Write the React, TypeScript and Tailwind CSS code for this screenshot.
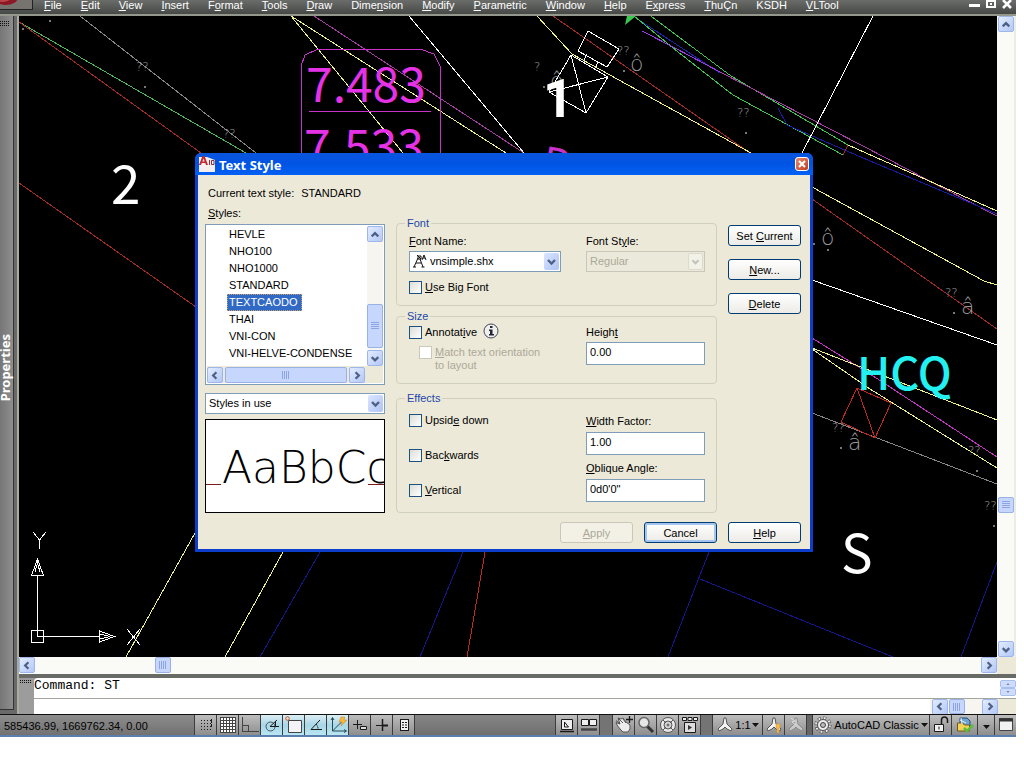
import { useState, type ReactNode } from "react";
import clsx from "clsx";

const MENUS = [
  "&File", "&Edit", "&View", "&Insert", "F&ormat", "&Tools", "&Draw", "Dime&nsion",
  "&Modify", "&Parametric", "&Window", "&Help", "E&xpress", "&ThuÇn", "KSDH", "&VLTool",
];

const STYLES = [
  "HEVLE", "NHO100", "NHO1000", "STANDARD", "TEXTCAODO", "THAI", "VNI-CON", "VNI-HELVE-CONDENSE",
];

// "&" marks the keyboard mnemonic, as in a Windows resource file
function Mnemonic({ text }: { text: string }) {
  const at = text.indexOf("&");
  if (at < 0) return <span>{text}</span>;
  return (
    <span>
      {text.slice(0, at)}
      <span className="underline underline-offset-1">{text[at + 1]}</span>
      {text.slice(at + 2)}
    </span>
  );
}

const CHEVRONS = {
  up: "M4 9.500 L7.500 6 L11 9.500",
  down: "M4 6 L7.500 9.500 L11 6",
  left: "M9 4 L5.500 7.500 L9 11",
  right: "M6 4 L9.500 7.500 L6 11",
};

type Direction = keyof typeof CHEVRONS;

function Chevron({ dir, className = "text-[#4d6185]" }: { dir: Direction; className?: string }) {
  return (
    <svg viewBox="0 0 15 15" className={clsx("size-[15px]", className)} fill="none" stroke="currentColor" strokeWidth="2.4">
      <path d={CHEVRONS[dir]} />
    </svg>
  );
}

function ScrollButton({ dir }: { dir: Direction }) {
  return (
    <button
      aria-label={`Scroll ${dir}`}
      className="flex size-4 shrink-0 items-center justify-center rounded-xs border border-[#9db6ec] bg-linear-to-br from-[#e3ecff] to-[#b4c8f6]"
    >
      <Chevron dir={dir} />
    </button>
  );
}

function Thumb({ className, vertical }: { className: string; vertical?: boolean }) {
  return (
    <div
      className={clsx(
        "flex shrink-0 items-center justify-center rounded-xs border border-[#98b1e6] bg-[#c6d6fc]",
        className,
      )}
    >
      <svg viewBox="0 0 8 8" className={clsx("size-2", vertical && "rotate-90")} stroke="#8da5e2" shapeRendering="crispEdges">
        <path d="M0.500 0V8M2.500 0V8M4.500 0V8M6.500 0V8" />
      </svg>
    </div>
  );
}

function MenuBar() {
  return (
    <header className="flex h-4 shrink-0 border-b-2 border-[#94988c] bg-linear-to-b from-[#6b6d6b] to-[#474947] text-white">
      <button aria-label="Application menu" className="h-[10px] w-[33px] shrink-0 border-r border-b border-[#222] bg-[#77736f]">
        <svg viewBox="0 0 32 9" className="h-[9px] w-8">
          <ellipse cx="6" cy="-3" rx="12" ry="8" fill="#8d1824" />
          <ellipse cx="3" cy="-3" rx="8" ry="5" fill="#b8434b" />
        </svg>
      </button>
      <nav className="flex items-start gap-[19px] pl-[11px] font-['Liberation_Sans',Arial,sans-serif] text-[11px] leading-[11px] whitespace-nowrap">
        {MENUS.map((menu) => (
          <button key={menu}>
            <Mnemonic text={menu} />
          </button>
        ))}
      </nav>
      <div className="ml-auto flex h-[10px] items-start gap-1 pr-[3px]">
        <button aria-label="Minimize">
          <svg viewBox="0 0 13 10" className="h-[10px] w-[13px]"><path d="M1 4h11v3H1z" fill="#fff" /></svg>
        </button>
        <button aria-label="Restore">
          <svg viewBox="0 0 12 10" className="h-[10px] w-3" fill="none" stroke="#fff" strokeWidth="2"><path d="M2 1h8v6H2zM5 4h2" /></svg>
        </button>
        <button aria-label="Close drawing">
          <svg viewBox="0 0 12 10" className="h-[10px] w-3" stroke="#fff" strokeWidth="2.500"><path d="M2 0l8 8M10 0L2 8" /></svg>
        </button>
      </div>
    </header>
  );
}

function PropertiesPalette() {
  return (
    <aside className="flex w-[19px] shrink-0 flex-col border-r-2 border-[#a9aca2] bg-[#696969] pb-1">
      <div className="mr-[3px] flex flex-1 flex-col items-start border-r border-b border-[#333] bg-linear-to-r from-[#767676] to-[#8e8e8e] pt-[5px]">
        <svg viewBox="0 0 11 5" className="h-[5px] w-[11px]" fill="#111" shapeRendering="crispEdges">
          {[0, 2, 4].map((y) => [0, 2, 4, 6, 8].map((x) => <rect key={`${x}-${y}`} x={x} y={y} width="1" height="1" />))}
        </svg>
        <div className="flex flex-1 items-center">
          <span className="rotate-180 font-['Noto_Sans',sans-serif] text-[13px] leading-[11px] font-bold text-white [writing-mode:vertical-rl]">
            Properties
          </span>
        </div>
      </div>
    </aside>
  );
}

const LINES: [string, string][] = [
  ["#858585", "80,16 256,153"],
  ["#4fb85c", "19,22 246,153"],
  ["#a32a26", "19,22 201,153"],
  ["#a32a26", "19,183 196,307"],
  ["#a53da5", "314,16 530,157"],
  ["#f2f28c", "291,16 403,153"],
  ["#f2f28c", "291,16 506,153"],
  ["#ffffff", "409,16 524,153"],
  ["#c832c8", "301,153 301,66 305,55 318,49 420,49 434,54 440,66 440,153"],
  ["#c832c8", "309,111 431,111"],
  ["#a32a26", "553,16 750,153"],
  ["#f2f28c", "537,16 572,54 590,64 751,153"],
  ["#ffffff", "588,31 619,49 607,67 578,51 588,31"],
  ["#ffffff", "587,54 584,60"],
  ["#ffffff", "598,61 596,67"],
  ["#ffffff", "571,55 608,77 586,113 549,92 571,55 586,113"],
  ["#ffffff", "608,77 549,92"],
  ["#2222b0", "636,18 720,73"],
  ["#3cc850", "634,16 678,52 733,95 843,155"],
  ["#3cc850", "651,16 731,76 848,145"],
  ["#9b3be6", "642,31 675,48 720,72"],
  ["#a53da5", "720,72 888,159 943,188 997,216"],
  ["#1a1aa0", "778,108 787,125 863,158 997,214"],
  ["#a32a26", "848,145 843,155"],
  ["#ffffff", "873,16 802,153"],
  ["#f2f28c", "848,145 997,211"],
  ["#f2f28c", "812,187 984,281 997,285"],
  ["#a32a26", "812,199 997,329"],
  ["#ffffff", "812,280 997,345"],
  ["#c832c8", "812,338 870,374 997,457"],
  ["#f2f28c", "812,348 997,420"],
  ["#f2f28c", "812,349 870,389 997,468"],
  ["#858585", "812,413 997,484"],
  ["#c02a26", "857,388 891,403 875,438 841,422 857,388 875,438"],
  ["#17178c", "709,552 668,657"],
  ["#17178c", "700,579 893,657"],
  ["#17178c", "997,562 961,657"],
  ["#17178c", "463,552 420,657"],
  ["#17178c", "320,552 260,657"],
  ["#c02a26", "485,552 467,657"],
  ["#f2f28c", "195,533 126,657"],
  ["#f2f28c", "283,552 225,657"],
];

// surveyed point heights whose glyphs are missing from the shape font
const MARKS: [string, number, number][] = [
  ["??", 136, 71], ["??", 223, 138], ["?", 534, 71], ["??", 617, 55], ["??", 737, 117],
  ["??", 945, 297], ["??", 832, 432], ["??", 968, 455], ["??", 984, 510],
];

const LETTERS: [string, number, number][] = [
  ["ô", 630, 71], ["ô", 550, 88], ["ô", 821, 245], ["â", 961, 314], ["â", 848, 450],
];

const DOTS = [
  [50, 21], [23, 29], [145, 87], [544, 87], [624, 71], [746, 133], [814, 244], [828, 250],
  [954, 313], [841, 448], [977, 471], [994, 526],
];

function Drawing() {
  return (
    <svg
      viewBox="19 16 978 641"
      preserveAspectRatio="xMinYMin slice"
      className="absolute inset-0 size-full font-['Noto_Sans_CJK_JP','Liberation_Sans',sans-serif]"
      aria-label="Model space"
    >
      <g fill="none" shapeRendering="crispEdges">
        {LINES.map(([color, points]) => (
          <polyline key={points} points={points} stroke={color} />
        ))}
        {DOTS.map(([cx, cy]) => (
          <circle key={`${cx}-${cy}`} cx={cx} cy={cy} r="1" stroke="#777" />
        ))}
      </g>
      <path d="M627 16h9l-11 9z" fill="#3cc850" />
      <g fill="#9a9a9a" className="font-['DejaVu_Sans',sans-serif] font-extralight">
        {MARKS.map(([text, x, y]) => (
          <text key={`${x}-${y}`} x={x} y={y} fontSize="12">{text}</text>
        ))}
        {LETTERS.map(([text, x, y]) => (
          <text key={`${x}-${y}`} x={x} y={y} fontSize="22">{text}</text>
        ))}
      </g>
      <g fontSize="53" fill="#fff">
        <text x="306" y="102" fontSize="48" fill="#e632e6">7.483</text>
        <text x="304" y="164" fontSize="48" fill="#e632e6">7.533</text>
        <text x="540" y="176" fontSize="42" fill="#c832c8" transform="rotate(10 540 176)">Pa</text>
        <text x="111" y="204">2</text>
        <text x="543" y="117" className="font-['Roboto',sans-serif] font-bold">1</text>
        <text x="841" y="573">S</text>
        <text x="857" y="390" fontSize="45" fill="#23f0f0" className="font-medium">HCQ</text>
      </g>
      {/* UCS icon */}
      <g fill="none" stroke="#fff" shapeRendering="crispEdges">
        <path d="M31.500 630.500h12v12h-12zM37.500 575v61.500H99M31.500 575.500h12L37.500 559zM99.500 631v11l15-5.500zM35 572l2.500-9 2.500 9M100 634l10 2.500-10 2.500" />
        <path d="M33 532l6.500 8 6.500-8M39.500 540v9M127 629l13 16M140 629l-13 16" />
      </g>
    </svg>
  );
}

function Label({ htmlFor, children }: { htmlFor: string; children: string }) {
  return (
    <label htmlFor={htmlFor} className="block leading-[14px]">
      <Mnemonic text={children} />
    </label>
  );
}

function Check({ label, disabled }: { label: string; disabled?: boolean }) {
  return (
    <label className={clsx("flex items-start gap-[3px] leading-[13px]", disabled && "text-[#aca899]")}>
      <input
        type="checkbox"
        disabled={disabled}
        className="size-[13px] shrink-0 appearance-none border border-[#1c5180] bg-linear-to-br from-[#dcdcd7] to-white checked:bg-[#21a121] disabled:border-[#cac8bb] disabled:bg-white disabled:bg-none"
      />
      <Mnemonic text={label} />
    </label>
  );
}

function Select({ id, options, disabled, icon }: { id: string; options: string[]; disabled?: boolean; icon?: ReactNode }) {
  return (
    <div
      className={clsx(
        "relative flex h-[21px] items-center border",
        disabled ? "border-[#c9c7ba] bg-[#ebe9d9]" : "border-[#7f9db9] bg-white",
      )}
    >
      {icon}
      <select
        id={id}
        aria-label={id}
        disabled={disabled}
        className="h-full w-full flex-1 appearance-none bg-transparent px-[3px] leading-[19px] outline-none disabled:text-[#aca899] disabled:opacity-100"
      >
        {options.map((o) => (
          <option key={o}>{o}</option>
        ))}
      </select>
      <span
        className={clsx(
          "pointer-events-none absolute top-px right-px flex h-[17px] w-[15px] items-center justify-center rounded-xs",
          disabled ? "border border-[#dddacb] bg-[#f3f2e8]" : "bg-linear-to-br from-[#dbe5ff] to-[#aec4f5]",
        )}
      >
        <Chevron dir="down" className={disabled ? "text-[#c5c3b6]" : "text-[#4d6185]"} />
      </span>
    </div>
  );
}

function Group({ title, className, children }: { title: string; className?: string; children: ReactNode }) {
  return (
    <fieldset className={clsx("rounded-sm border border-[#d0d0bf] pr-[11px] pl-3", className)}>
      <legend className="-ml-1 px-0.5 leading-[14px] text-[#2546a8]">{title}</legend>
      <div className="grid grid-cols-[152px_119px] gap-x-[25px]">{children}</div>
    </fieldset>
  );
}

function TextField({ id, value }: { id: string; value: string }) {
  return (
    <input
      id={id}
      type="text"
      defaultValue={value}
      className="block h-[23px] w-full border border-[#7f9db9] bg-white px-[3px] pb-[3px] outline-none"
    />
  );
}

function PushButton({ label, variant = "normal" }: { label: string; variant?: "normal" | "default" | "disabled" }) {
  return (
    <button
      disabled={variant === "disabled"}
      className={clsx(
        "h-[21px] w-[73px] rounded-[3px] border pt-px leading-[18px]",
        variant === "normal" && "border-[#003c74] bg-linear-to-b from-white to-[#ecebe6]",
        variant === "default" && "border-[#003c74] bg-linear-to-b from-white to-[#ecebe6] inset-ring-2 inset-ring-[#a6c4f0]",
        variant === "disabled" && "border-[#c9c7ba] bg-[#f3f1e6] text-[#aca899]",
      )}
    >
      <Mnemonic text={label} />
    </button>
  );
}

function StyleList() {
  const [selected, setSelected] = useState("TEXTCAODO");
  return (
    <div className="border border-[#7f9db9] bg-white p-px">
      <div className="flex">
        <ul role="listbox" aria-label="Styles" className="flex-1 overflow-hidden pb-1 pl-5 whitespace-nowrap">
          {STYLES.map((name) => (
            <li
              key={name}
              role="option"
              aria-selected={name === selected}
              onClick={() => setSelected(name)}
              className={clsx(
                "w-fit border pr-1 pl-px leading-[15px]",
                name === selected ? "border-dotted border-[#c8a070] bg-[#316ac5] text-white" : "border-transparent",
              )}
            >
              {name}
            </li>
          ))}
        </ul>
        <div className="flex w-4 flex-col bg-[#f6f5f0]">
          <ScrollButton dir="up" />
          <div className="flex-1" />
          <Thumb vertical className="mb-0.5 h-11" />
          <ScrollButton dir="down" />
        </div>
      </div>
      <div className="flex bg-[#ece9d8] pt-px">
        <ScrollButton dir="left" />
        <Thumb className="mx-0.5 h-4 w-[122px]" />
        <ScrollButton dir="right" />
      </div>
    </div>
  );
}

function TextStyleDialog() {
  return (
    <section
      role="dialog"
      aria-label="Text Style"
      className="absolute top-[137px] left-[176px] w-[618px] rounded-t-md border-x-[3px] border-b-[3px] border-[#0c3ecb] bg-[#ece9d8] text-black"
    >
      <div className="-mx-[3px] flex h-[22px] items-center gap-1 rounded-t-md bg-linear-to-b from-[#0a55dd] via-[#0054e3] to-[#0361f5] px-1">
        <svg viewBox="0 0 16 16" className="size-4">
          <path d="M0 1h8l8 3v12H0z" fill="#f4eeee" />
          <path d="M0 9L3.500 0h2L9 9H7L6.300 7H2.700L2 9zM3.300 5.500h2.400L4.500 2.500z" fill="#c3262e" fillRule="evenodd" />
          <path d="M10.500 4v5M12.500 4.500h2.500v4h-2.500z" fill="none" stroke="#86303a" />
        </svg>
        <h1 className="pt-0.5 font-['Noto_Sans','Open_Sans',sans-serif] text-[13px] leading-5 font-bold text-white">Text Style</h1>
        <button aria-label="Close" className="ml-auto flex size-[14px] items-center justify-center rounded-[3px] border border-white bg-linear-to-br from-[#e58a6c] to-[#c4381a]">
          <svg viewBox="0 0 10 10" className="size-[10px]" stroke="#fff" strokeWidth="2"><path d="M2 2l6 6M8 2L2 8" /></svg>
        </button>
      </div>

      <div className="pt-[11px] pr-[9px] pb-[6px] pl-[10px] font-['Liberation_Sans',Arial,sans-serif] text-[11px]">
        <p className="leading-[14px]">
          Current text style: <span className="ml-1">STANDARD</span>
        </p>
        <div className="-ml-[3px] flex items-start">
          <div className="mt-[6px] mr-[11px] w-[180px]">
            <p className="mb-1 pl-[3px] leading-[14px]">
              <Mnemonic text="&Styles:" />
            </p>
            <StyleList />
            <div className="mt-2">
              <Select id="Style filter" options={["Styles in use", "All styles"]} />
            </div>
            <div className="mt-[5px] h-[94px] overflow-hidden border border-black bg-white">
              <svg viewBox="0 0 178 92" className="size-full" aria-label="Preview">
                <path d="M0 64.500h15M162 64.500h16" stroke="#7a1c1c" shapeRendering="crispEdges" />
                <text x="16" y="63" fontSize="44" className="font-['DejaVu_Sans',sans-serif] font-extralight">AaBbCc</text>
              </svg>
            </div>
          </div>

          <div className="mt-4 w-[321px]">
            <Group title="Font" className="pb-[11px]">
              <div className="pt-1">
                <Label htmlFor="Font Name">&Font Name:</Label>
                <div className="mt-[3px] mb-[9px]">
                  <Select
                    id="Font Name"
                    options={["vnsimple.shx"]}
                    icon={
                      <svg viewBox="0 0 15 15" className="ml-0.5 size-[15px] shrink-0" fill="none" stroke="#111">
                        <path d="M1 13h3M2 13L6 4M6 2h3v3H6zM8 5l3 8M9.500 13h3M4 9h5M10 6l2-5 2 5M11 4h2M5 1l4 4" />
                      </svg>
                    }
                  />
                </div>
                <Check label="&Use Big Font" />
              </div>
              <div className="pt-1">
                <Label htmlFor="Font Style">Font St&yle:</Label>
                <div className="mt-[3px]">
                  <Select id="Font Style" options={["Regular"]} disabled />
                </div>
              </div>
            </Group>
            <Group title="Size" className="mt-[3px] pb-[11px]">
              <div className="pt-[3px]">
                <div className="flex h-[13px] items-center gap-[6px]">
                  <Check label="Annotat&ive" />
                  <svg viewBox="0 0 16 16" className="-mt-1 size-4" fill="#fff">
                    <circle cx="8" cy="8" r="7" fill="#f0efea" stroke="#44465c" />
                    <path d="M7 3h2.500v2H7zM6 6.500h3.500V11H11v1.500H6V11h1V8H6z" fill="#23253c" />
                  </svg>
                </div>
                <div className="mt-[7px] pr-4 pl-[10px]">
                  <Check disabled label="&Match text orientation to layout" />
                </div>
              </div>
              <div className="pt-0.5">
                <Label htmlFor="height">Heigh&t</Label>
                <div className="mt-[3px]">
                  <TextField id="height" value="0.00" />
                </div>
              </div>
            </Group>
            <Group title="Effects" className="mt-[7px] pb-[10px]">
              <div className="flex flex-col gap-[22px] pt-[9px]">
                <Check label="Upsid&e down" />
                <Check label="Bac&kwards" />
                <Check label="&Vertical" />
              </div>
              <div className="pt-[9px]">
                <Label htmlFor="width-factor">&Width Factor:</Label>
                <div className="mt-[4px] mb-[6px]">
                  <TextField id="width-factor" value="1.00" />
                </div>
                <Label htmlFor="oblique">&Oblique Angle:</Label>
                <div className="mt-[4px]">
                  <TextField id="oblique" value={"0d0'0\""} />
                </div>
              </div>
            </Group>
          </div>

          <div className="mt-[25px] ml-auto flex flex-col gap-[13px]">
            <PushButton label="Set &Current" />
            <PushButton label="&New..." />
            <PushButton label="&Delete" />
          </div>
        </div>
        <div className="mt-[9px] flex justify-end gap-[11px]">
          <PushButton label="&Apply" variant="disabled" />
          <PushButton label="Cancel" variant="default" />
          <PushButton label="&Help" />
        </div>
      </div>
    </section>
  );
}

function CommandLine() {
  return (
    <div className="flex border-t-4 border-[#686a66] bg-[#9c9c9c]">
      <div className="w-[15px] shrink-0 pt-[2px] pl-px">
        <svg viewBox="0 0 12 3" className="h-[3px] w-3" fill="#111" shapeRendering="crispEdges">
          {[0, 2].map((y) => [0, 2, 4, 6, 8, 10].map((x) => <rect key={`${x}-${y}`} x={x} y={y} width="1" height="1" />))}
        </svg>
      </div>
      <div className="flex-1 rounded-tl-sm bg-white">
        <div className="flex h-[21px] justify-between border-b border-[#a3a69c]">
          <p className="font-['Liberation_Mono',monospace] text-[13px] leading-4">Command: ST</p>
          <div className="flex flex-col justify-between py-[2px]">
            {["M7 5l2-2 2 2z", "M7 3l2 2 2-2z"].map((d) => (
              <button key={d} aria-label="Scroll history" className="h-2 w-4 rounded-xs border border-[#a9bff0] bg-[#cfdcfc]">
                <svg viewBox="1 0 16 8" className="block h-[6px] w-[14px]" fill="#4d6185"><path d={d} /></svg>
              </button>
            ))}
          </div>
        </div>
        <div className="flex">
          <input aria-label="Command" className="h-[15px] flex-1 bg-white px-px font-['Liberation_Mono',monospace] text-[13px] outline-none" />
          <div className="flex h-[15px] w-[86px] items-center bg-[#f6f5f0] pl-[2px]">
            <ScrollButton dir="left" />
            <Thumb className="ml-px h-[15px] w-4" />
            <div className="ml-auto flex">
              <ScrollButton dir="right" />
              <div className="h-[15px] w-[18px] bg-[#ece9d8]" />
            </div>
          </div>
        </div>
      </div>
    </div>
  );
}

function StatusButton({ label, active, children, className = "w-[22px]" }: { label: string; active?: boolean; children: ReactNode; className?: string }) {
  return (
    <button
      aria-label={label}
      className={clsx(
        "flex h-full shrink-0 items-center justify-center border-l border-[#3c3c3c]",
        active ? "bg-linear-to-b from-[#dceef4] via-[#a9d6e6] to-[#b8e6f2]" : "bg-linear-to-b from-[#bdbdbd] to-[#8e8e8e]",
        className,
      )}
    >
      {children}
    </button>
  );
}

function Glyph({ children, className = "size-[18px]" }: { children: ReactNode; className?: string }) {
  return (
    <svg viewBox="0 0 18 18" className={clsx("shrink-0", className)} fill="none" stroke="#1a1a1a">
      {children}
    </svg>
  );
}

function Caret() {
  return <svg viewBox="0 0 7 4" className="h-1 w-[7px] shrink-0" fill="#111"><path d="M0 0h7L3.500 4z" /></svg>;
}

const SCALE_FIGURE = "M8 2h2l1 6 5 5-1 2-4-2-2-2-2 2-4 2-1-2 5-5z";

function StatusBar() {
  return (
    <footer className="flex h-[23px] shrink-0 border-t border-b-2 border-t-[#111] border-b-[#5a7fae] bg-[#7d7d7d] font-['Liberation_Sans',sans-serif] text-[11px] whitespace-nowrap">
      <div className="w-[194px] shrink-0 bg-linear-to-b from-[#8d8d8d] to-[#727272] pl-1 leading-[22px]">585436.99, 1669762.34, 0.00</div>
      <StatusButton label="Snap">
        <Glyph>
          <path strokeDasharray="1 2" shapeRendering="crispEdges" d="M4 4.500h10M4 7.500h10M4 10.500h10M4 13.500h10" />
          <path d="M14.500 3v8" strokeDasharray="4 1" />
        </Glyph>
      </StatusButton>
      <StatusButton label="Grid">
        <Glyph>
          <path fill="#fff" stroke="#444" shapeRendering="crispEdges" d="M1.500 1.500h15v15h-15zM4.500 1v15M7.500 1v15M10.500 1v15M13.500 1v15M1 4.500h15M1 7.500h15M1 10.500h15M1 13.500h15" />
        </Glyph>
      </StatusButton>
      <StatusButton label="Ortho">
        <Glyph><path stroke="#444" shapeRendering="crispEdges" d="M1.500 1v14.500H18M1.500 9.500h6v6" /></Glyph>
      </StatusButton>
      <StatusButton label="Polar" active>
        <Glyph>
          <circle cx="7.500" cy="10.500" r="4.500" stroke="#3f5560" />
          <path d="M7 10.500L14 4M7 10.500h9M12.500 5v6" />
        </Glyph>
      </StatusButton>
      <StatusButton label="Object snap" active>
        <Glyph>
          <path d="M3.500 4.500h13v12h-13z" fill="#f4f4f6" stroke="#444" />
          <circle cx="2.500" cy="2.500" r="1.800" stroke="#b0603a" fill="#f6d8c0" />
        </Glyph>
      </StatusButton>
      <StatusButton label="Object snap tracking" active>
        <Glyph><path d="M13 4L4 13.500h11" /><path strokeDasharray="2 1" d="M9 8q2 2 2 5" /></Glyph>
      </StatusButton>
      <StatusButton label="Dynamic UCS" active>
        <Glyph>
          <path stroke="#234a55" d="M3.500 2v13H17M3.500 15l9-9M2 4l1.500-2.500L5 4M15 13.500l2.500 1.500-2.500 1.500" />
          <path d="M12 1h4l-1 3h3l-6 6 1-4h-3z" fill="#f6b73c" stroke="#c48428" strokeWidth="0.500" />
        </Glyph>
      </StatusButton>
      <StatusButton label="Dynamic input">
        <Glyph><path shapeRendering="crispEdges" d="M6.500 4v9M2 8.500h9" /><path d="M9.500 10.500h6v3h-6z" fill="#ddd" /></Glyph>
      </StatusButton>
      <StatusButton label="Lineweight">
        <Glyph><path d="M3 9.500h7" /><path d="M9.500 3v12" strokeWidth="1.500" /><path d="M9 9.500h6" strokeWidth="2" /></Glyph>
      </StatusButton>
      <StatusButton label="Quick properties">
        <Glyph><path shapeRendering="crispEdges" d="M5.500 3.500h8v11h-8z" fill="#f2f2f2" /><path d="M7 6.500h2M10 6.500h2M7 9h2M10 9h2M7 11.500h2M10 11.500h2" /></Glyph>
      </StatusButton>
      <div className="flex-1 border-l border-[#3c3c3c] bg-linear-to-b from-[#868686] to-[#6f6f6f]" />

      <StatusButton label="Model">
        <Glyph><path d="M3.500 3.500h11v10h-11z" fill="#eee" /><path d="M6.500 6v5h4z" /><path d="M2 15.500h14" strokeWidth="1.500" /></Glyph>
      </StatusButton>
      <StatusButton label="Layouts">
        <Glyph><path d="M1.500 3.500h7v6h-7zM9.500 3.500h7v6h-7z" fill="#eee" /><path d="M1 13.500h16" stroke="#444" strokeWidth="2.500" /></Glyph>
      </StatusButton>
      <div className="w-[13px] shrink-0 border-l border-[#3c3c3c] bg-[#747474]" />
      <StatusButton label="Pan">
        <Glyph>
          <path d="M1 4.500l4 3.500M4 3l4 4M8 3l3 4M5 8L1 6.500 2 9l3 4 3 3h5l2-3V9l-4-3-3-4-2 1-3-1z" fill="#ececec" stroke="#555" />
          <path d="M14.500 0v7M11 3.500h7" strokeWidth="1.300" />
        </Glyph>
      </StatusButton>
      <StatusButton label="Zoom">
        <Glyph><path d="M10 10l6 6" strokeWidth="3" stroke="#333" /><circle cx="7" cy="6.500" r="5" fill="#e6e6e6" stroke="#666" strokeWidth="1.500" /></Glyph>
      </StatusButton>
      <StatusButton label="Steering wheel">
        <Glyph>
          <circle cx="9" cy="9" r="7.500" fill="#e9e9e9" stroke="#555" />
          <circle cx="9" cy="9" r="4" fill="#d5d5d5" stroke="#555" />
          <path d="M4 4l3 3M14 4l-3 3M4 14l3-3M14 14l-3-3M7.500 9h3M9 7.500v3" stroke="#555" />
        </Glyph>
      </StatusButton>
      <StatusButton label="Show motion">
        <Glyph><path d="M1.500 1.500h4v3h-4zM7 1.500h4v3H7zM12.500 1.500h4v3h-4z" fill="#eee" /><path d="M3.500 6.500h11v10h-11z" fill="#ddd" /><path d="M7 9v5l4-2.500z" fill="#333" stroke="none" /></Glyph>
      </StatusButton>
      <div className="w-3 shrink-0 border-l border-[#3c3c3c] bg-[#747474]" />
      <StatusButton label="Annotation scale" className="w-[50px] gap-[1px]">
        <Glyph><path d={SCALE_FIGURE} fill="#f2f2f2" stroke="#555" /></Glyph>
        1:1
        <Caret />
      </StatusButton>
      <StatusButton label="Annotation visibility">
        <Glyph><path d={SCALE_FIGURE} fill="#f2f2f2" stroke="#555" /><path d="M11 8h4v4h-1v5h-2v-5h-1z" fill="#f4bb52" stroke="#d78c2a" strokeWidth="0.500" /></Glyph>
      </StatusButton>
      <StatusButton label="Add scales">
        <Glyph><path d={SCALE_FIGURE} fill="#c9c9c9" stroke="#8c8c8c" /><path d="M4 2l4 3-3 1 4 3" stroke="#ddd" /></Glyph>
      </StatusButton>
      <div className="w-[6px] shrink-0 border-l border-[#3c3c3c] bg-[#666]" />
      <StatusButton label="Workspace" className="w-[117px] gap-0.5">
        <Glyph>
          <circle cx="9" cy="9" r="7" stroke="#444" strokeWidth="3" strokeDasharray="3 2.500" />
          <circle cx="9" cy="9" r="7" stroke="#ededed" strokeWidth="2" strokeDasharray="2 3.500" strokeDashoffset="-0.500" />
          <circle cx="9" cy="9" r="5.500" fill="#ededed" stroke="#555" />
          <circle cx="9" cy="9" r="2.500" fill="#bbb" stroke="#444" />
        </Glyph>
        AutoCAD Classic
        <Caret />
      </StatusButton>
      <StatusButton label="Lock">
        <Glyph><path d="M9.500 8V4a3 3 0 016 0v3" strokeWidth="1.500" /><path d="M2.500 8.500h9v7h-9z" fill="#f0f0f0" /><path d="M7 10.500v3" /></Glyph>
      </StatusButton>
      <StatusButton label="Hardware" className="w-[26px]">
        <Glyph>
          <path d="M4 2h7l3 3v6H4z" fill="#6fa3d0" stroke="#23507c" />
          <path d="M1.500 7h5l2 2h5v6h-12z" fill="#f3d257" stroke="#6a5a20" />
          <path d="M4 4l6 3M5 2l1 6" stroke="#e8f1f8" />
          <path d="M8 12l3 3 6-6" stroke="#5bbd3a" strokeWidth="2.500" />
        </Glyph>
      </StatusButton>
      <StatusButton label="Status menu" className="w-[17px] pt-1"><Caret /></StatusButton>
      <StatusButton label="Clean screen">
        <Glyph><path d="M2.500 2.500h13v12h-13z" fill="#f2f2f2" stroke="#444" /><path d="M2 4h14" strokeWidth="3" stroke="#333" /></Glyph>
      </StatusButton>
    </footer>
  );
}

export default function App() {
  return (
    <div className="h-screen bg-white pr-2 pb-[31px]">
      <div className="flex h-full flex-col">
        <MenuBar />
        <div className="flex min-h-0 flex-1">
          <PropertiesPalette />
          <main className="flex min-w-0 flex-1 flex-col">
            <div className="flex flex-1">
              <div className="relative flex-1 bg-black">
                <Drawing />
                <TextStyleDialog />
              </div>
              <div className="flex w-[19px] flex-col items-center border-r-2 border-[#ecebe4] bg-[#fafaf7]">
                <ScrollButton dir="up" />
                <div className="flex flex-1 flex-col">
                  <div className="grow-[465]" />
                  <Thumb vertical className="h-4 w-4" />
                  <div className="grow-[128]" />
                </div>
                <ScrollButton dir="down" />
              </div>
            </div>
            <div className="flex h-[17px] bg-[#fafaf7]">
              <ScrollButton dir="left" />
              <div className="flex flex-1">
                <div className="grow-[120]" />
                <Thumb className="h-4 w-4" />
                <div className="grow-[809]" />
              </div>
              <ScrollButton dir="right" />
              <div className="w-[19px] bg-[#ece9d8]" />
            </div>
            <CommandLine />
          </main>
        </div>
        <StatusBar />
      </div>
    </div>
  );
}
